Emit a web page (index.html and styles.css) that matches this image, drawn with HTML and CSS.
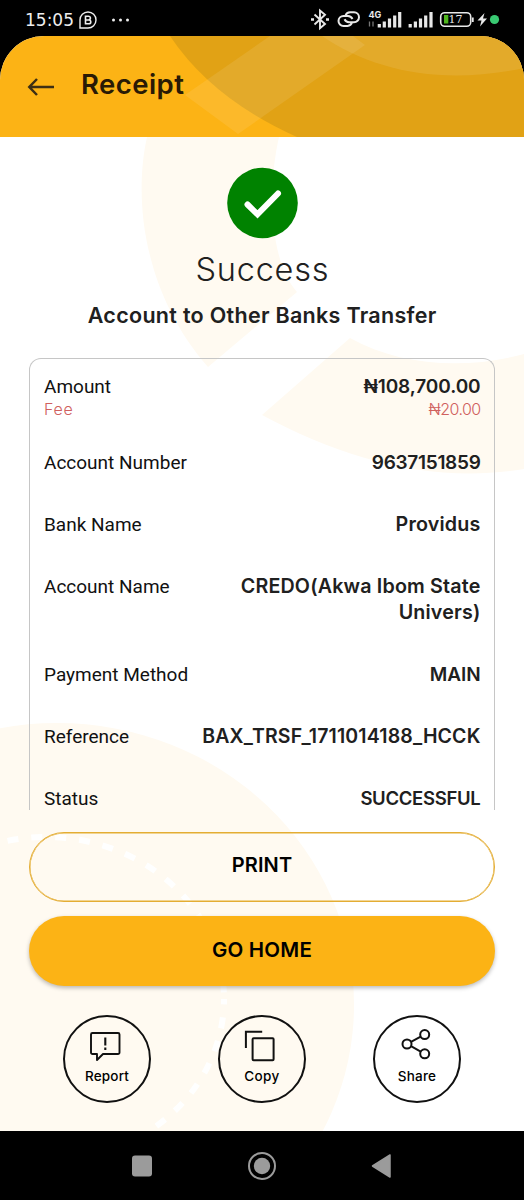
FILE: index.html
```html
<!DOCTYPE html>
<html lang="en">
<head>
<meta charset="utf-8">
<title>Receipt</title>
<link rel="stylesheet" href="styles.css">
</head>
<body>
<div class="phone">
  <div class="statusbar">
    <span class="clock">15:05</span>
    <svg class="st-chat" width="18" height="18" viewBox="0 0 18 18" fill="none" stroke="#eee" stroke-width="1.4"><path d="M1 17V9a8 8 0 1 1 8 8Z"/><path d="M6.500 5.200h3a1.900 1.900 0 0 1 0 3.800H6.500Zm0 3.800h3.400a1.900 1.900 0 0 1 0 3.800H6.500Z" stroke-width="1.600"/></svg>
    <svg class="st-dots" width="20" height="4" viewBox="0 0 20 4" fill="#eee"><circle cx="2.500" cy="2" r="1.500"/><circle cx="9.500" cy="2" r="1.500"/><circle cx="16.500" cy="2" r="1.500"/></svg>
    <svg class="st-icons" width="192" height="24" viewBox="308 8 192 24" fill="none" stroke="#e8e8e8">
      <path d="M314.500 14.500l10.500 9.500-5 4.200V10.500l5 4.200L314.500 24.500" stroke-width="1.900"/>
      <path d="M311 19.500h3M326 19.500h3" stroke-width="2.600"/>
      <path d="M352 22.500a5 5 0 0 1-4.500 3.500h-4a5 5 0 0 1 0-10h4.500a5.500 5.500 0 0 1 4.500 3M345.500 15.500a5 5 0 0 1 4.500-3.300h4a5 5 0 0 1 0 10h-5a5.500 5.500 0 0 1-4.500-3" stroke-width="2"/>
      <text class="st-4g" x="368.500" y="17.800">4G</text>
      <path d="M369.500 21.500v5M373 21.500v5" stroke="#777" stroke-width="1.300"/>
      <path d="M379.300 27.500v-3.500M384.300 27.500v-6M389.500 27.500v-9M394.700 27.500v-12M399.700 27.500v-15.500M410.200 27.500v-3.500M415.400 27.500v-6M420.500 27.500v-9M425.700 27.500v-12M431 27.500v-15.500" stroke-width="3.200"/>
      <rect x="440.700" y="12.700" width="30" height="13.600" rx="4" stroke-width="1.600"/>
      <rect x="444" y="15" width="4.300" height="8.500" fill="#4fb51d" stroke="none"/>
      <text class="st-bat" x="448.500" y="23.300">17</text>
      <path d="M472.800 17.500v4.500" stroke-width="1.800"/>
      <path d="M484.500 13l-7 7.500h4l-1.500 6 7-8h-4Z" fill="#e8e8e8" stroke="none"/>
      <circle cx="494.500" cy="19.500" r="4.600" fill="#39ca72" stroke="none"/>
    </svg>
  </div>
  <main class="screen">
    <header class="appbar">
      <svg class="appbar-art" width="524" height="101" viewBox="0 36 524 101">
        <path d="M170 36Q212 99 297 137H524V36Z" fill="#e1a215"/>
        <path d="M185 95L270 36H353L365 45 238 134Z" fill="#fff" fill-opacity=".09"/>
        <path d="M322 36C372 70 440 86 524 68V36Z" fill="#fff" fill-opacity=".09"/>
      </svg>
      <svg class="back" width="28" height="20" viewBox="0 0 28 20" fill="none" stroke="#3d2f14" stroke-width="2.500"><path d="M27 10H2.500M10 2L2.300 10l7.700 8"/></svg>
      <h1 class="title">Receipt</h1>
    </header>
    <section class="content">
      <svg class="backdrop" width="524" height="994" viewBox="0 137 524 994" fill="#fffaf1">
        <path d="M147 137C134 195 141 290 208 367L297 292C270 262 267 190 279 137Z"/>
        <path d="M350 338C400 366 465 370 524 354V469C435 484 345 460 262 415Z"/>
        <ellipse cx="57" cy="1005" rx="297" ry="282"/>
        <ellipse cx="46" cy="999" rx="178" ry="162" fill="none" stroke="#fff" stroke-width="6" stroke-dasharray="11 13" stroke-dashoffset="5.500"/>
      </svg>
      <svg class="check" width="72" height="72" viewBox="0 0 72 72"><circle cx="36.500" cy="36" r="35.300" fill="#008200"/><path d="M21.500 37.500l10 9.800L52 26.500" fill="none" stroke="#fff" stroke-width="6" stroke-linecap="round"/></svg>
      <h2 class="success">Success</h2>
      <p class="subtitle">Account to Other Banks Transfer</p>
      <div class="card">
        <div class="row row-amount">
          <div class="label">Amount<small class="fee-label">Fee</small></div>
          <div class="value"><span class="tight">₦108,700.00</span><small class="fee-value"><span>₦20.00</span></small></div>
        </div>
        <div class="row"><div class="label">Account Number</div><div class="value"><span class="digits">9637151859</span></div></div>
        <div class="row"><div class="label">Bank Name</div><div class="value"><span class="wide">Providus</span></div></div>
        <div class="row"><div class="label">Account Name</div><div class="value"><span class="wide">CREDO(Akwa Ibom State</span><br><span class="wide">Univers)</span></div></div>
        <div class="row"><div class="label">Payment Method</div><div class="value"><span class="tight">MAIN</span></div></div>
        <div class="row"><div class="label">Reference</div><div class="value"><span class="ref">BAX_TRSF_1711014188_HCCK</span></div></div>
        <div class="row"><div class="label">Status</div><div class="value"><span class="status">SUCCESSFUL</span></div></div>
      </div>
      <button class="btn btn-print">PRINT</button>
      <button class="btn btn-home">GO HOME</button>
      <div class="actions">
        <button class="action"><svg width="36" height="36" viewBox="0 0 36 36" fill="none" stroke="#111" stroke-width="1.900" stroke-linejoin="round"><path d="M3.500 4h25.500a1.500 1.500 0 0 1 1.500 1.500V23.500a1.500 1.500 0 0 1-1.500 1.500H14l-6 6v-6H3.500A1.500 1.500 0 0 1 2 23.500V5.500A1.500 1.500 0 0 1 3.500 4Z"/><path d="M16.300 8.500v8M16.300 18.500v2.500" stroke-width="2.100"/></svg><span>Report</span></button>
        <button class="action"><svg width="36" height="36" viewBox="0 0 36 36" fill="none" stroke="#111" stroke-width="2"><rect x="8.600" y="9.200" width="21" height="22" rx="1"/><path d="M1.900 19V2.700h16.300"/></svg><span class="copy">Copy</span></button>
        <button class="action"><svg width="36" height="36" viewBox="0 0 36 36" fill="none" stroke="#111" stroke-width="2"><circle cx="25.700" cy="5.600" r="4.500"/><circle cx="8" cy="15" r="4.500"/><circle cx="25.700" cy="24.800" r="4.500"/><path d="M12 12.800l9.700-5.200M12 17.200l9.700 5.400"/></svg><span>Share</span></button>
      </div>
    </section>
  </main>
  <nav class="navbar">
    <svg width="20" height="28" viewBox="0 0 20 28"><rect y="3.500" width="20" height="21" rx="3" fill="#9b9b9b"/></svg>
    <svg width="28" height="28" viewBox="0 0 28 28"><circle cx="14" cy="14" r="13" fill="none" stroke="#9b9b9b" stroke-width="2"/><circle cx="14" cy="14" r="8.200" fill="#9b9b9b"/></svg>
    <svg width="20" height="28" viewBox="0 0 20 28"><path d="M1.500 14L19 3v22Z" fill="#9b9b9b" stroke="#9b9b9b" stroke-width="1.500" stroke-linejoin="round"/></svg>
  </nav>
</div>
</body>
</html>
```
FILE: styles.css
```css
* { box-sizing: border-box; }
body { margin: 0; background: #000; font-family: Inter, "Noto Sans", sans-serif; color: #202020; }
h1, h2, p { margin: 0; }
button { font: inherit; color: #000; margin: 0; padding: 0; }
.phone { width: 524px; height: 1200px; background: #000; display: flex; flex-direction: column; }
.statusbar { height: 36px; display: flex; align-items: center; padding: 3px 24px 0 25px; }
.clock { font: 17px "DejaVu Sans", sans-serif; color: #eee; }
.st-chat { margin-left: 5px; }
.st-dots { margin-left: 14px; }
.st-icons { margin-left: auto; }
.st-4g { font: 700 9px Inter, sans-serif; fill: #e8e8e8; stroke: none; }
.st-bat { font: 11px "DejaVu Serif", serif; fill: #e8e8e8; stroke: none; }
.screen { height: 1095px; background: #fff; border-radius: 44px 44px 0 0; overflow: hidden; flex: none; }
.appbar { height: 101px; background: #fcb315; position: relative; display: flex; align-items: center; padding: 0 27px; }
.appbar-art { position: absolute; inset: 0; }
.back { position: relative; }
.title { position: relative; margin-left: 26px; padding-bottom: 6px; font-size: 27.5px; font-weight: 600; letter-spacing: .45px; color: #291a05; }
.content { position: relative; height: 994px; display: flex; flex-direction: column; align-items: center; padding: 30px 29px 0; }
.backdrop { position: absolute; left: 0; top: 0; }
.content > :not(.backdrop) { position: relative; }
.check { flex: none; }
.success { font-size: 32.5px; font-weight: 300; line-height: 40px; letter-spacing: .8px; margin: 11px -.8px 0 0; }
.subtitle { font-size: 21.5px; font-weight: 600; line-height: 26px; letter-spacing: .3px; white-space: nowrap; margin: 12px -.3px 2px 0; }
.card { width: 466px; height: 452px; margin-top: 28px; border: 1px solid #c6c6c6; border-bottom: 0; border-radius: 12px 12px 0 0; overflow: hidden; padding: 15px 13.5px 0 14px; flex: none; }
.row { display: flex; justify-content: space-between; line-height: 26px; padding-bottom: 36px; }
.row-amount { height: 76px; padding: 0; }
.label { font-family: Roboto, sans-serif; font-size: 19px; color: #111; }
.value { font-size: 19px; font-weight: 600; text-align: right; white-space: nowrap; }
.value span { line-height: 20px; }
.row small { display: block; font-size: 16px; line-height: 19px; font-weight: 300; color: #d0605e; }
.row small span { line-height: inherit; }
.fee-label { font-family: Inter, sans-serif; letter-spacing: .7px; }
.fee-value { letter-spacing: -.6px; }
.tight { letter-spacing: -.1px; }
.digits { letter-spacing: -.3px; }
.wide { font-size: 19.7px; letter-spacing: .17px; }
.ref { font-size: 19.5px; letter-spacing: .15px; }
.status { font-size: 18.5px; letter-spacing: -.3px; }
.btn { width: 466px; height: 70px; border-radius: 35px; font-size: 20px; font-weight: 600; padding-bottom: 4px; flex: none; }
.btn-print { margin-top: 22px; background: none; border: 1px solid #e4ad33; box-shadow: inset 0 0 0 .5px #e4ad33; letter-spacing: .1px; }
.btn-home { margin-top: 14px; background: #fcb315; border: 0; box-shadow: 0 2px 4px #0004; font-size: 20.5px; letter-spacing: .2px; }
.actions { display: flex; justify-content: space-between; width: 398px; margin-top: 29px; }
.action { width: 88px; height: 88px; border: 2px solid #111; border-radius: 50%; background: none; display: flex; flex-direction: column; align-items: center; justify-content: flex-start; padding-top: 12px; font-size: 13.5px; font-weight: 500; line-height: 20px; letter-spacing: .2px; }
.action svg { flex: none; margin-bottom: 1px; }
.copy { letter-spacing: .4px; }
.navbar { height: 69px; display: flex; justify-content: space-between; align-items: center; padding: 0 133px 0 132px; }
```
